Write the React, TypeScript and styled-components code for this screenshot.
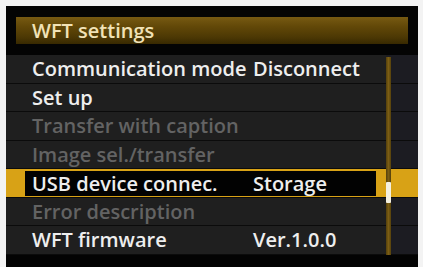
import React from "react";
import styled, { createGlobalStyle } from "styled-components";

const Global = createGlobalStyle`
  html, body { margin: 0; padding: 0; background: #f3f3f3; }
  body { font-family: "Open Sans", "DejaVu Sans", sans-serif; }
`;

const Page = styled.div`
  width: 423px;
  height: 267px;
  box-sizing: border-box;
  padding: 6px 5px 0 6px;
  background: #f3f3f3;
  overflow: hidden;
`;

const Screen = styled.div`
  position: relative;
  height: 261px;
  background: #040404;
  display: flex;
  flex-direction: column;
`;

const TitleBar = styled.div`
  margin: 11px 10px 0 10px;
  height: 27px;
  box-sizing: border-box;
  padding-left: 16px;
  display: flex;
  align-items: center;
  background: linear-gradient(#775a12 0%, #624808 35%, #4c3804 75%, #382901 100%);
  color: #f1e2b6;
  font-size: 20px;
  font-weight: 600;
`;

const List = styled.div`
  position: relative;
  margin-top: 11px;
  display: flex;
  flex-direction: column;
`;

const Row = styled.div<{ $selected?: boolean }>`
  height: 28.5px;
  box-sizing: border-box;
  display: flex;
  align-items: stretch;
  background: ${(p) =>
    p.$selected
      ? "#d8a216"
      : "linear-gradient(to right, #1f1f1f 0, #1f1f1f 380px, #1c1c22 380px)"};
  border-bottom: 1.5px solid #0b0b0b;
  padding-left: ${(p) => (p.$selected ? "19px" : "0")};
`;

const RowInner = styled.div<{ $selected?: boolean }>`
  display: flex;
  align-items: center;
  width: ${(p) => (p.$selected ? "351px" : "100%")};
  box-sizing: border-box;
  padding-left: ${(p) => (p.$selected ? "7px" : "26px")};
  margin: ${(p) => (p.$selected ? "2px 0 1px" : "0")};
  background: ${(p) => (p.$selected ? "#020202" : "transparent")};
`;

const Label = styled.span<{ $disabled?: boolean }>`
  width: 221px;
  flex: none;
  white-space: nowrap;
  font-size: 20px;
  font-weight: 600;
  color: ${(p) => (p.$disabled ? "#636363" : "#eeeeee")};
`;

const Value = styled.span`
  white-space: nowrap;
  font-size: 20px;
  font-weight: 600;
  color: #eeeeee;
`;

const ScrollTrack = styled.div`
  position: absolute;
  left: 380px;
  top: 2px;
  bottom: 0;
  width: 5px;
  background: linear-gradient(to right, #54400c, #7c5e14, #54400c);
`;

const ScrollThumb = styled.div`
  position: absolute;
  left: 380px;
  top: 127px;
  width: 5px;
  height: 21px;
  background: #f4f0e0;
  border-radius: 1px;
`;

const BottomBand = styled.div`
  flex: 1;
  background: #030303;
`;

type Item = { label: string; value?: string; disabled?: boolean; selected?: boolean };

const items: Item[] = [
  { label: "Communication mode", value: "Disconnect" },
  { label: "Set up" },
  { label: "Transfer with caption", disabled: true },
  { label: "Image sel./transfer", disabled: true },
  { label: "USB device connec.", value: "Storage", selected: true },
  { label: "Error description", disabled: true },
  { label: "WFT firmware", value: "Ver.1.0.0" },
];

export default function App() {
  return (
    <Page>
      <Global />
      <Screen>
        <TitleBar>WFT settings</TitleBar>
        <List>
          {items.map((it) => (
            <Row key={it.label} $selected={it.selected}>
              <RowInner $selected={it.selected}>
                <Label $disabled={it.disabled}>{it.label}</Label>
                {it.value && <Value>{it.value}</Value>}
              </RowInner>
            </Row>
          ))}
          <ScrollTrack />
          <ScrollThumb />
        </List>
        <BottomBand />
      </Screen>
    </Page>
  );
}
